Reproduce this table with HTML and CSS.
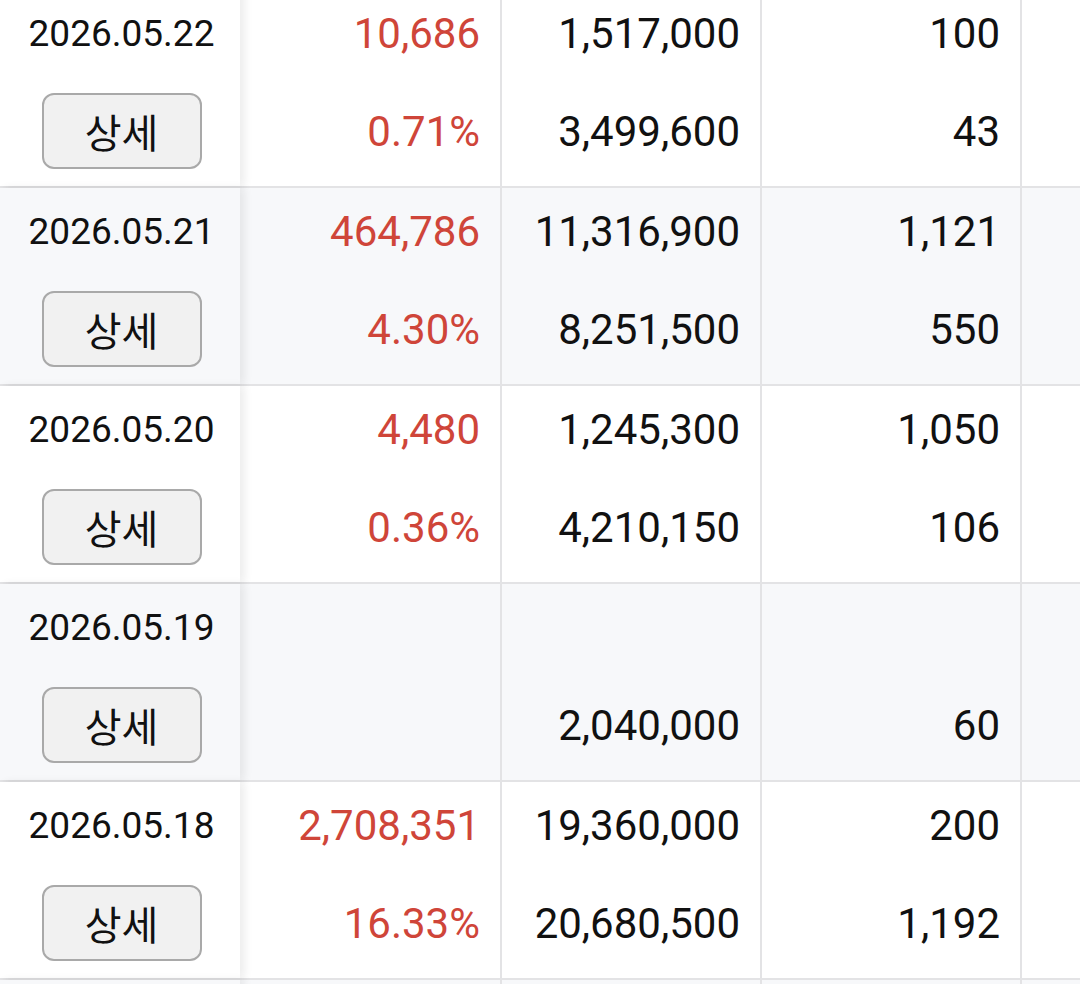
FILE: index.html
```html
<!DOCTYPE html>
<html lang="ko">
<head>
<meta charset="utf-8">
<link rel="stylesheet" href="styles.css">
</head>
<body>
<div class="table">
  <div class="row">
    <div class="cell first"><div class="line date">2026.05.22</div><div class="line"><button class="btn">상세</button></div></div>
    <div class="cell num red"><div class="line">10,686</div><div class="line">0.71%</div></div>
    <div class="cell num"><div class="line">1,517,000</div><div class="line">3,499,600</div></div>
    <div class="cell num"><div class="line">100</div><div class="line">43</div></div>
    <div class="cell last"></div>
  </div>
  <div class="row alt">
    <div class="cell first"><div class="line date">2026.05.21</div><div class="line"><button class="btn">상세</button></div></div>
    <div class="cell num red"><div class="line">464,786</div><div class="line">4.30%</div></div>
    <div class="cell num"><div class="line">11,316,900</div><div class="line">8,251,500</div></div>
    <div class="cell num"><div class="line">1,121</div><div class="line">550</div></div>
    <div class="cell last"></div>
  </div>
  <div class="row">
    <div class="cell first"><div class="line date">2026.05.20</div><div class="line"><button class="btn">상세</button></div></div>
    <div class="cell num red"><div class="line">4,480</div><div class="line">0.36%</div></div>
    <div class="cell num"><div class="line">1,245,300</div><div class="line">4,210,150</div></div>
    <div class="cell num"><div class="line">1,050</div><div class="line">106</div></div>
    <div class="cell last"></div>
  </div>
  <div class="row alt">
    <div class="cell first"><div class="line date">2026.05.19</div><div class="line"><button class="btn">상세</button></div></div>
    <div class="cell num red"><div class="line"></div><div class="line"></div></div>
    <div class="cell num"><div class="line"></div><div class="line">2,040,000</div></div>
    <div class="cell num"><div class="line"></div><div class="line">60</div></div>
    <div class="cell last"></div>
  </div>
  <div class="row">
    <div class="cell first"><div class="line date">2026.05.18</div><div class="line"><button class="btn">상세</button></div></div>
    <div class="cell num red"><div class="line">2,708,351</div><div class="line">16.33%</div></div>
    <div class="cell num"><div class="line">19,360,000</div><div class="line">20,680,500</div></div>
    <div class="cell num"><div class="line">200</div><div class="line">1,192</div></div>
    <div class="cell last"></div>
  </div>
  <div class="row alt">
    <div class="cell first"><div class="line date"></div><div class="line"></div></div>
    <div class="cell num"></div>
    <div class="cell num"></div>
    <div class="cell num"></div>
    <div class="cell last"></div>
  </div>
</div>
</body>
</html>
```
FILE: styles.css
```css
html, body {
  margin: 0;
  padding: 0;
  background: #ffffff;
  overflow: hidden;
}
body {
  font-family: Roboto, "Noto Sans CJK KR", sans-serif;
  color: #111111;
}
.table {
  margin-top: -10px;
  width: 1080px;
}
.row {
  display: grid;
  grid-template-columns: 240px 262px 260px 260px 58px;
  border-bottom: 2px solid #e3e3e5;
  background: #ffffff;
  height: 196px;
}
.row.alt {
  background: #f7f8fa;
}
.cell {
  display: flex;
  flex-direction: column;
  gap: 18px;
  padding-top: 3px;
  box-sizing: border-box;
}
.cell.num {
  border-right: 2px solid #e3e3e5;
  padding-right: 20px;
  align-items: flex-end;
  font-size: 42px;
}
.cell.first {
  position: relative;
  z-index: 1;
  align-items: center;
  padding-left: 3px;
  box-shadow: 5px 0 8px rgba(0, 0, 0, 0.07);
  background: inherit;
}
.line {
  height: 80px;
  display: flex;
  align-items: center;
}
.date {
  font-size: 37px;
  letter-spacing: 0;
}
.red {
  color: #cf4539;
}
.btn {
  width: 160px;
  height: 76px;
  border: 2px solid #a9a9a9;
  border-radius: 12px;
  background: #f1f1f1;
  font-family: "Noto Sans CJK KR", sans-serif;
  font-size: 40px;
  color: #111111;
  padding: 0;
  margin: 0;
  display: flex;
  align-items: center;
  justify-content: center;
}
```
